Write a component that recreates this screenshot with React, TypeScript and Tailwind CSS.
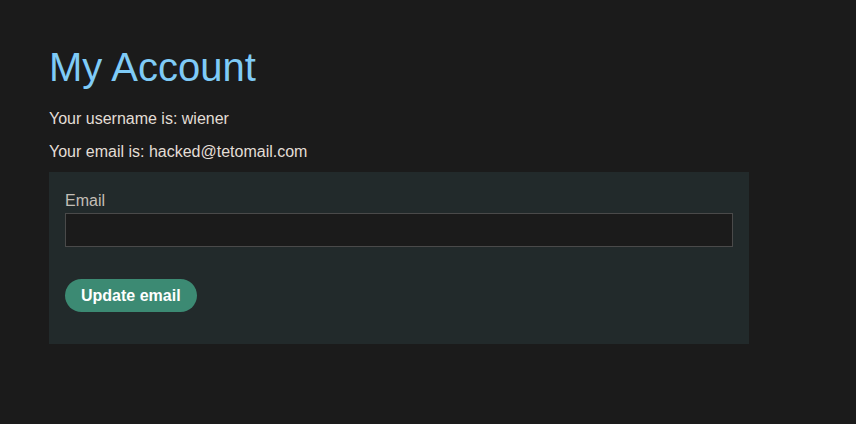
export default function App() {
  return (
    <div className="min-h-[424px] w-full bg-[#1b1b1b] pl-[49px] pt-[44px] font-['Liberation_Sans',Arial,sans-serif]">
      <h1 className="text-[40px] leading-[46px] text-[#7fcbf7]">My Account</h1>
      <p className="mt-[17px] text-[16px] leading-[24px] text-[#e3ded6]">Your username is: wiener</p>
      <p className="mt-[9px] text-[16px] leading-[24px] text-[#e3ded6]">Your email is: hacked@tetomail.com</p>
      <form className="mt-[8px] flex w-[700px] flex-col bg-[#222a2b] px-[16px] pb-[32px] pt-[17px]">
        <label className="text-[16px] leading-[24px] text-[#c3beb6]">Email</label>
        <input
          type="email"
          name="email"
          className="h-[34px] w-full border border-[#4a4a4a] bg-[#1b1b1b] px-2 text-[16px] text-[#e3ded6] outline-none"
        />
        <div className="mt-[32px]">
          <button
            type="button"
            className="h-[33px] rounded-full bg-[#3c8a73] px-[16px] text-[16px] font-bold text-white"
          >
            Update email
          </button>
        </div>
      </form>
    </div>
  );
}
